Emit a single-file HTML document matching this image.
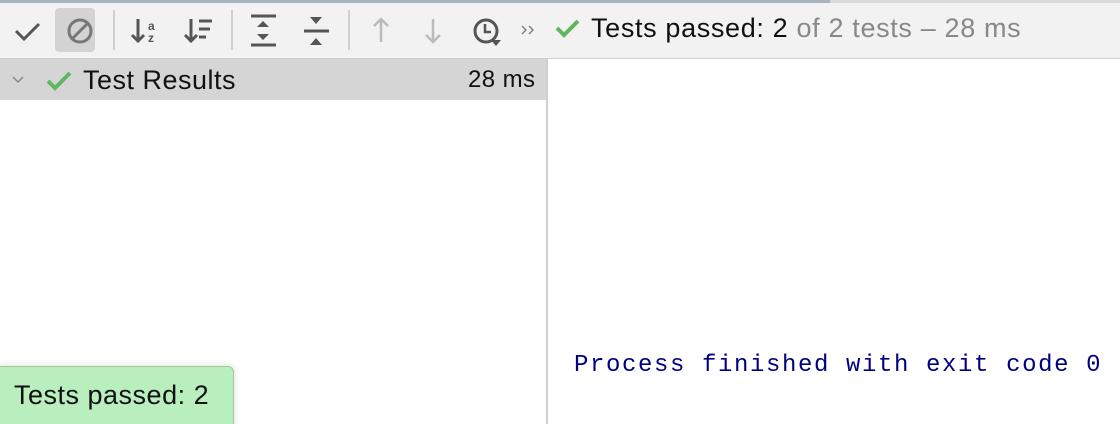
<!DOCTYPE html>
<html style="height:424px;overflow:hidden"><head><style>
body{margin:0;width:1120px;height:424px;overflow:hidden;background:#fff;font-family:"Liberation Sans",sans-serif;position:relative}
.abs{position:absolute}
</style></head><body>
<div class="abs" style="left:0;top:0;width:1120px;height:58px;background:#f2f2f2;border-bottom:1px solid #d0d0d0"></div>
<div class="abs" style="left:0;top:0;width:1120px;height:3px;background:#dadada"></div>
<div class="abs" style="left:0;top:0;width:830px;height:3px;background:#a8b3c3"></div>
<div class="abs" style="left:55px;top:8px;width:40px;height:44px;background:#d3d3d3;border-radius:4px"></div>
<div class="abs" style="left:113px;top:10px;width:2px;height:40px;background:#d0d0d0"></div>
<div class="abs" style="left:231px;top:10px;width:2px;height:40px;background:#d0d0d0"></div>
<div class="abs" style="left:348px;top:10px;width:2px;height:40px;background:#d0d0d0"></div>
<svg class="abs" style="left:0;top:0" width="600" height="58" fill="none" stroke-width="3">
<path d="M16 31 L24 39 L39 24" stroke="#555"/>
<circle cx="80" cy="31" r="11" stroke="#777"/><path d="M73 38 L87 24" stroke="#777"/>
<path d="M138 19 V41 M132 35 L138 41 L144 35" stroke="#555"/>
<text x="148" y="30" font-size="12" fill="#555" stroke="none" font-family="Liberation Sans" font-weight="bold">a</text>
<text x="148" y="42" font-size="12" fill="#555" stroke="none" font-family="Liberation Sans" font-weight="bold">z</text>
<path d="M191 19 V41 M185 35 L191 41 L197 35 M199 21 H212 M199 29 H210 M199 37 H206" stroke="#555"/>
<path d="M251 16 H276 M251 45 H276" stroke="#555"/><path d="M257 27 L263 21 L269 27Z M257 34 L263 40 L269 34Z" fill="#555" stroke="none"/>
<path d="M304 31 H329" stroke="#555"/><path d="M310 17 L316 24 L322 17Z M310 45 L316 38 L322 45Z" fill="#555" stroke="none"/>
<path d="M381 19 V42 M374 26 L381 19 L388 26" stroke="#bbb" stroke-width="2.5"/>
<path d="M433 19 V42 M426 35 L433 42 L440 35" stroke="#bbb" stroke-width="2.5"/>
<circle cx="486" cy="31" r="11" stroke="#555"/><path d="M485 24 V32 H491" stroke="#555" stroke-width="2.5"/>
<path d="M491 40 H501 L496 46Z" fill="#555" stroke="none"/>
<path d="M522 26 L526 30 L522 34 M529 26 L533 30 L529 34" stroke="#777" stroke-width="1.3"/>
<path d="M557 28 L564 35 L578 21" stroke="#5fb760" stroke-width="4"/>
</svg>
<div class="abs" style="left:591px;top:13px;font-size:27px;letter-spacing:0.65px;color:#111;white-space:nowrap">Tests passed: 2 <span style="color:#888">of 2 tests – 28 ms</span></div>
<div class="abs" style="left:0;top:59px;width:546px;height:41px;background:#d5d5d5"></div>
<div class="abs" style="left:546px;top:59px;width:2px;height:365px;background:#d0d0d0"></div>
<svg class="abs" style="left:0;top:59px" width="100" height="41" fill="none">
<path d="M13 18 L18 23 L23 18" stroke="#888" stroke-width="1.5"/>
<path d="M48 22 L55 29 L70 14" stroke="#5fb760" stroke-width="4"/>
</svg>
<div class="abs" style="left:83px;top:65px;font-size:27px;letter-spacing:0.5px;color:#111">Test Results</div>
<div class="abs" style="left:468px;top:66px;font-size:24px;letter-spacing:0.4px;color:#111">28 ms</div>
<div class="abs" style="left:574px;top:352px;font-size:24px;color:#000080;font-family:'Liberation Mono',monospace;white-space:nowrap;letter-spacing:1.6px">Process finished with exit code 0</div>
<div class="abs" style="left:-4px;top:366px;width:236px;height:70px;background:#b9eebe;border:1px solid #9acb9f;border-radius:6px;box-shadow:0 0 8px rgba(0,0,0,.15)"></div>
<div class="abs" style="left:14px;top:380px;font-size:27px;letter-spacing:0.5px;color:#111">Tests passed: 2</div>
</body></html>
